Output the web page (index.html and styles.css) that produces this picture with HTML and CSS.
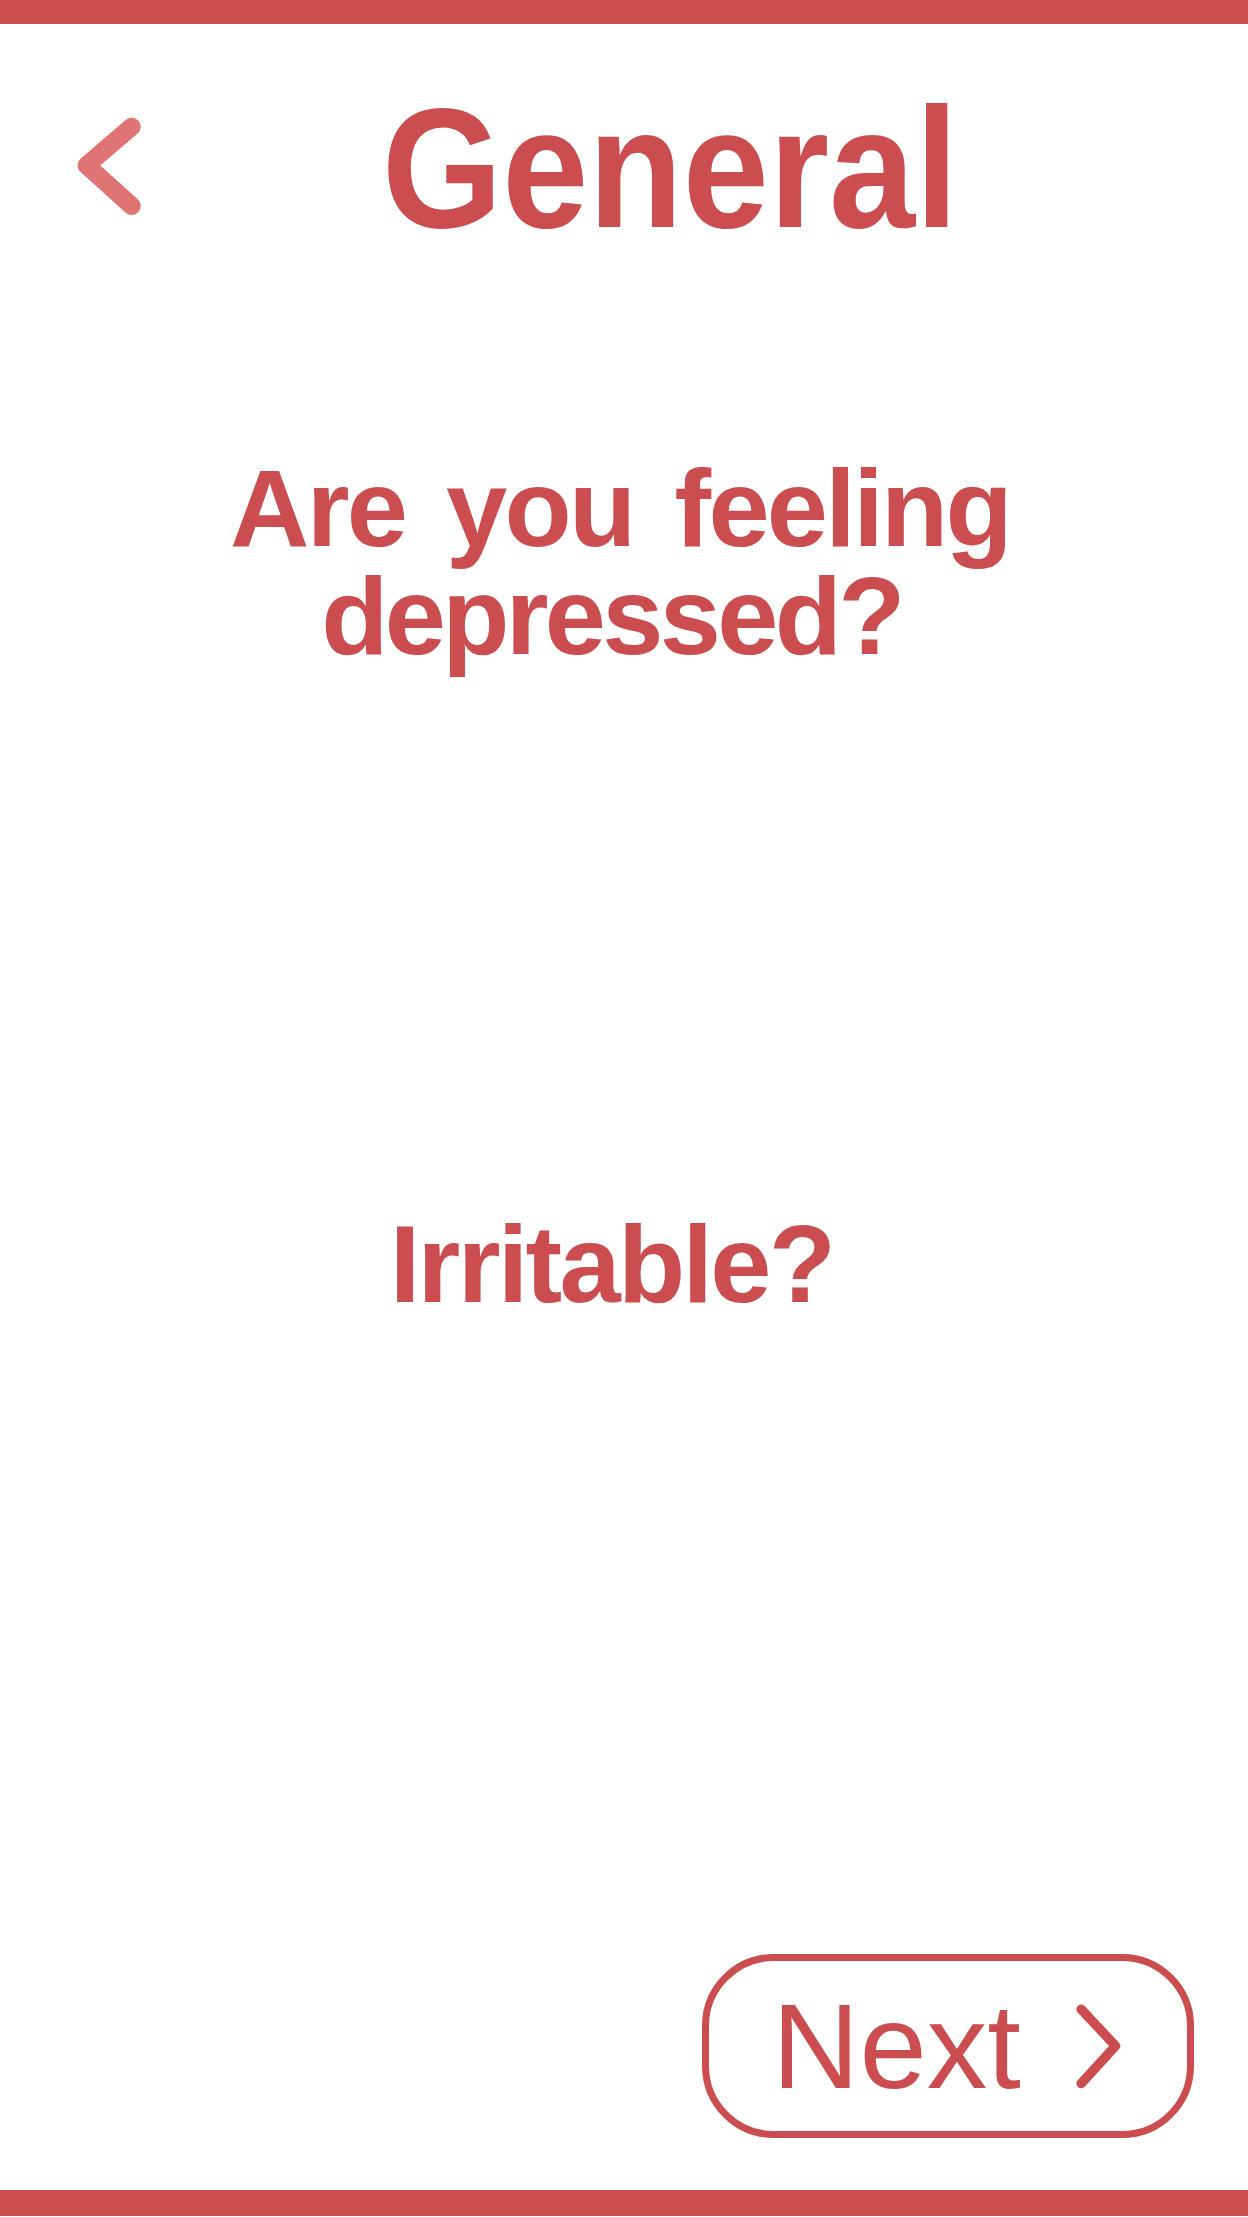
FILE: index.html
```html
<!DOCTYPE html>
<html lang="en">
<head>
<meta charset="utf-8">
<title>General</title>
<link rel="stylesheet" href="styles.css">
</head>
<body>
<div class="topbar"></div>
<header class="header">
  <svg class="back" width="64" height="100" viewBox="0 0 64 100" aria-label="Back">
    <polyline points="54.7,10.7 9.6,49.3 54.7,90" fill="none" stroke="#E07373" stroke-width="18" stroke-linecap="round" stroke-linejoin="round"/>
  </svg>
  <h1 class="title">General</h1>
</header>
<main class="questions">
  <h2 class="question q1">Are you feeling <span class="tight">depressed?</span></h2>
  <h2 class="question q2">Irritable?</h2>
</main>
<footer class="footer">
  <button class="next">
    <span class="next-label">Next</span>
    <svg class="next-icon" width="48" height="88" viewBox="0 0 48 88">
      <polyline points="7.2,7.2 41.5,44 7.2,81.5" fill="none" stroke="#CB4D4F" stroke-width="9.5" stroke-linecap="round" stroke-linejoin="round"/>
    </svg>
  </button>
</footer>
<div class="bottombar"></div>
</body>
</html>
```
FILE: styles.css
```css
html, body {
  margin: 0;
  padding: 0;
  background: #ffffff;
}
body {
  width: 1248px;
  height: 2217px;
  overflow: hidden;
  font-family: "Liberation Sans", Arial, Helvetica, sans-serif;
  color: #CB4D4F;
}
.topbar {
  height: 24px;
  background: #CB4D4F;
}
.header {
  display: flex;
  align-items: flex-start;
  padding-left: 77px;
  height: 229px;
}
.back {
  display: block;
  margin-top: 92px;
  flex: none;
}
.title {
  margin: 59px 0 0 241px;
  font-size: 170px;
  line-height: 170px;
  font-weight: 700;
  white-space: nowrap;
  display: inline-block;
  transform: scaleX(0.91);
  transform-origin: left center;
}
.questions {
  display: flex;
  flex-direction: column;
  align-items: center;
  padding-right: 25px;
}
.question {
  margin: 0;
  font-size: 110px;
  line-height: 108px;
  font-weight: 700;
  letter-spacing: -2.7px;
  text-align: center;
  width: 1100px;
}
.q1 {
  margin-top: 201px;
  word-spacing: 13px;
  text-indent: 17px;
}
.tight {
  letter-spacing: -3.7px;
}
.q2 {
  margin-top: 540px;
}
.footer {
  display: flex;
  justify-content: flex-end;
  padding-right: 54px;
  margin-top: 636px;
}
.next {
  display: flex;
  align-items: center;
  box-sizing: border-box;
  width: 492px;
  height: 184px;
  border: 7px solid #CB4D4F;
  border-radius: 72px;
  background: #ffffff;
  padding: 0 0 0 63px;
  margin: 0;
  font-family: "Liberation Sans", Arial, Helvetica, sans-serif;
  color: #CB4D4F;
  cursor: pointer;
}
.next-label {
  font-size: 121px;
  line-height: 121px;
  font-weight: 400;
}
.next-icon {
  display: block;
  margin-left: 53px;
  flex: none;
}
.bottombar {
  margin-top: 52px;
  height: 26px;
  background: #CB4D4F;
}
```
